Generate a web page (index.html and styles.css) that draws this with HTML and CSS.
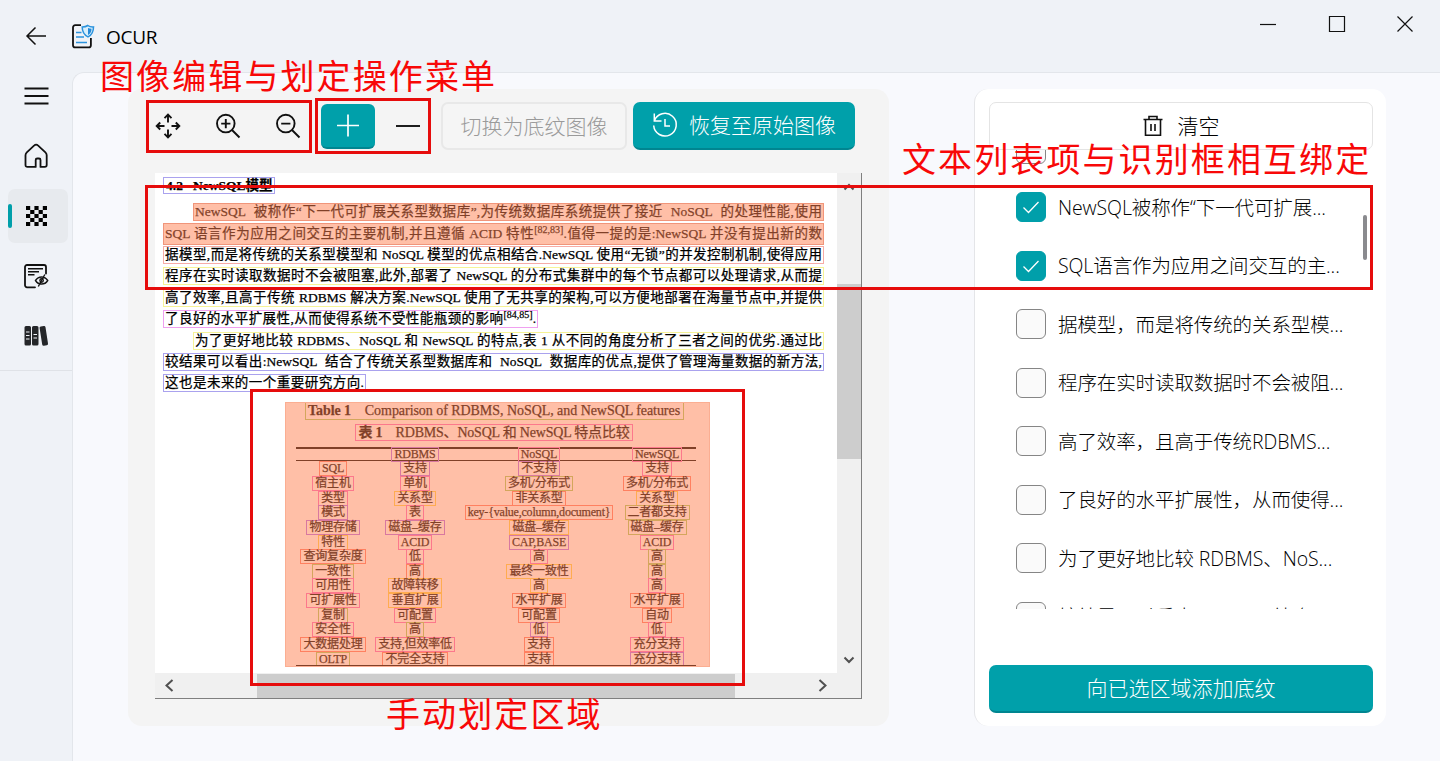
FILE: index.html
```
<!DOCTYPE html>
<html lang="zh-CN">
<head>
<meta charset="utf-8">
<title>OCUR</title>
<link rel="stylesheet" href="styles.css">
</head>
<body>
<div class="app">
  <header class="titlebar">
    <svg class="back" width="22" height="20" viewBox="0 0 22 20"><path d="M21 10H2M10.500 1.500L2 10l8.500 8.500"/></svg>
    <svg class="logo" width="23" height="25" viewBox="0 0 23 25">
      <path class="ink" d="M9 1.200H3.200A2.200 2.200 0 0 0 1 3.400v17.800a2.200 2.200 0 0 0 2.200 2.200h13.500a2.200 2.200 0 0 0 2.200-2.200V14"/>
      <path class="blue" d="M4 8.500h5.500M4 13h8M4 18.500h11"/>
      <path class="shield" d="M15.800 1.500c1.600 1.100 3.500 1.500 5.700 1.400 0 4.500-1.200 7.700-5.500 9.900-4.300-2.200-5.800-5.400-5.800-9.900 2.200 0 4-.4 5.600-1.400z"/>
      <path class="shield-half" d="M16 4v7c2.800-1.600 3.500-3.500 3.500-6.200-1.400 0-2.500-.3-3.500-.8z"/>
    </svg>
    <span class="app-name">OCUR</span>
    <div class="window-controls">
      <svg width="18" height="18" viewBox="0 0 18 18"><path d="M1 9.500h16"/></svg>
      <svg width="18" height="18" viewBox="0 0 18 18"><path d="M1.500 1.500h15v15h-15z"/></svg>
      <svg width="18" height="18" viewBox="0 0 18 18"><path d="M1.500 1.500l15 15M16.500 1.500l-15 15"/></svg>
    </div>
  </header>

  <div class="body">
    <nav class="sidebar">
      <div class="nav-item"><svg width="26" height="26" viewBox="0 0 26 26"><path d="M1.500 5.500h24M1.500 13h24M1.500 20.500h24"/></svg></div>
      <div class="nav-item"><svg width="26" height="26" viewBox="0 0 26 26"><path class="round" d="M2.500 12.300c0-1.300.4-2 1.300-2.900l7.500-7c1.100-1.100 2.500-1.100 3.600 0l7.500 7c.9.900 1.300 1.600 1.300 2.900v9.700c0 1.200-.7 1.900-1.900 1.900h-4.300V17c0-1-.6-1.500-1.500-1.500h-1.800c-.9 0-1.500.5-1.500 1.500v6.900H4.400c-1.200 0-1.900-.7-1.900-1.900z"/></svg></div>
      <div class="nav-item active"><div class="nav-pill"><svg width="21" height="20" viewBox="0 0 21 20"><path class="solid" d="M0 0h4.200v4H0zM8.400 0h4.200v4H8.400zM16.800 0H21v4h-4.200zM4.200 4h4.200v4H4.200zM12.600 4h4.200v4h-4.200zM0 8h4.200v4H0zM8.400 8h4.200v4H8.400zM16.800 8H21v4h-4.200zM4.200 12h4.200v4H4.200zM12.600 12h4.200v4h-4.200zM0 16h4.200v4H0zM8.400 16h4.200v4H8.400zM16.800 16H21v4h-4.200z"/></svg></div></div>
      <div class="nav-item"><svg width="26" height="26" viewBox="0 0 26 26"><path class="round" d="M12 24.300H4A2 2 0 0 1 2 22.300V4a2 2 0 0 1 2-2h17a2 2 0 0 1 2 2v6.500"/><path class="fine" d="M5 5.800h15M5 8.800h11M5 11.800h6.500M12.500 17.500c3-4.700 9.200-4.700 12.200 0-3 4.700-9.200 4.700-12.200 0zM21.800 11.500l-6.500 12"/><circle class="fine" cx="18.600" cy="17.500" r="1.700"/></svg></div>
      <div class="nav-item"><svg width="26" height="22" viewBox="0 0 26 22"><path class="book" d="M3 1h3.500a1.500 1.500 0 0 1 1.500 1.500v16.500a1.500 1.500 0 0 1-1.500 1.500H3A1.500 1.500 0 0 1 1.500 19V2.500A1.500 1.500 0 0 1 3 1zM10.500 1H14a1.500 1.500 0 0 1 1.500 1.500V19a1.500 1.500 0 0 1-1.500 1.500h-3.500A1.500 1.500 0 0 1 9 19V2.500A1.500 1.500 0 0 1 10.500 1zM17.800 1.400l3-.4a1.500 1.500 0 0 1 1.700 1.200l2.500 16.400a1.500 1.500 0 0 1-1.200 1.700l-2.900.4a1.500 1.500 0 0 1-1.700-1.200L16.600 3.100a1.500 1.500 0 0 1 1.200-1.700z"/><path class="bands" d="M3 7h3.500M3 10.500h3.500M3 14h3.500M10.500 9.500h3.500M10.500 13h3.500"/></svg></div>
    </nav>

    <main class="main">
      <section class="editor">
        <div class="toolbar">
          <div class="tool"><svg width="26" height="26" viewBox="0 0 26 26"><path d="M13 1.800v7.700M13 16.500v7.700M1.800 13h7.700M16.500 13h7.700M9.500 5.200L13 1.700l3.500 3.500M9.500 20.800l3.500 3.500 3.500-3.500M5.200 9.500L1.700 13l3.500 3.500M20.800 9.500l3.500 3.500-3.500 3.500"/></svg></div>
          <div class="tool"><svg width="26" height="26" viewBox="0 0 26 26"><circle cx="10.800" cy="10.600" r="8.800"/><path d="M17 17l7.500 7.500M10.800 6v9.200M6.200 10.600h9.200"/></svg></div>
          <div class="tool"><svg width="26" height="26" viewBox="0 0 26 26"><circle cx="10.800" cy="10.600" r="8.800"/><path d="M17 17l7.500 7.500M6.200 10.600h9.200"/></svg></div>
          <div class="tool"><div class="tool-on"><svg width="24" height="24" viewBox="0 0 24 24"><path d="M12 1.500v22M1 12.500h22"/></svg></div></div>
          <div class="tool"><svg width="24" height="24" viewBox="0 0 24 24"><path d="M0 12h24"/></svg></div>
          <div class="btn disabled"><span>切换为底纹图像</span></div>
          <div class="btn primary restore"><svg width="26" height="26" viewBox="0 0 26 26"><path d="M2.300 9A11.300 11.300 0 1 1 1.700 13.500M2.300 1.500V9h7.200M13 7v7h5"/></svg><span>恢复至原始图像</span></div>
        </div>

        <div class="viewer">
          <div class="page">
            <div class="heading"><span class="hit violet">4.2&nbsp;&nbsp; NewSQL模型</span></div>
            <div class="lines">
              <div class="line indent"><div class="hit marked">NewSQL&nbsp; 被称作“下一代可扩展关系型数据库”,为传统数据库系统提供了接近&nbsp; NoSQL&nbsp; 的处理性能,使用</div></div>
              <div class="line"><div class="hit marked tall">SQL 语言作为应用之间交互的主要机制,并且遵循 ACID 特性<sup>[82,83]</sup>.值得一提的是:NewSQL 并没有提出新的数</div></div>
              <div class="line"><div class="hit rose">据模型,而是将传统的关系型模型和 NoSQL 模型的优点相结合.NewSQL 使用“无锁”的并发控制机制,使得应用</div></div>
              <div class="line"><div class="hit yellow">程序在实时读取数据时不会被阻塞,此外,部署了 NewSQL 的分布式集群中的每个节点都可以处理请求,从而提</div></div>
              <div class="line"><div class="hit yellow">高了效率,且高于传统 RDBMS 解决方案.NewSQL 使用了无共享的架构,可以方便地部署在海量节点中,并提供</div></div>
              <div class="line short"><div class="hit pink">了良好的水平扩展性,从而使得系统不受性能瓶颈的影响<sup>[84,85]</sup>.</div></div>
              <div class="line indent"><div class="hit yellow">为了更好地比较 RDBMS、NoSQL 和 NewSQL 的特点,表 1 从不同的角度分析了三者之间的优劣.通过比</div></div>
              <div class="line"><div class="hit violet">较结果可以看出:NewSQL&nbsp; 结合了传统关系型数据库和&nbsp; NoSQL&nbsp; 数据库的优点,提供了管理海量数据的新方法,</div></div>
              <div class="line last"><div class="hit violet">这也是未来的一个重要研究方向.</div></div>
            </div>
            <div class="region">
              <div class="caption-en"><span class="cell green"><b>Table 1</b>&nbsp;&nbsp;&nbsp; Comparison of RDBMS, NoSQL, and NewSQL features</span></div>
              <div class="caption-zh"><span class="cell pink"><b>表 1</b>&nbsp;&nbsp;&nbsp; RDBMS、NoSQL 和 NewSQL 特点比较</span></div>
              <div class="grid head"><i></i><i><span class="cell violet">RDBMS</span></i><i><span class="cell pink">NoSQL</span></i><i><span class="cell pink">NewSQL</span></i></div>
              <div class="grid rows">
                <i><span class="cell rose">SQL</span></i><i><span class="cell violet">支持</span></i><i><span class="cell violet">不支持</span></i><i><span class="cell pink">支持</span></i>
                <i><span class="cell pink">宿主机</span></i><i><span class="cell pink">单机</span></i><i><span class="cell green">多机/分布式</span></i><i><span class="cell rose">多机/分布式</span></i>
                <i><span class="cell pink">类型</span></i><i><span class="cell yellow">关系型</span></i><i><span class="cell rose">非关系型</span></i><i><span class="cell yellow">关系型</span></i>
                <i><span class="cell violet">模式</span></i><i><span class="cell pink">表</span></i><i><span class="cell rose">key-{value,column,document}</span></i><i><span class="cell green">二者都支持</span></i>
                <i><span class="cell violet">物理存储</span></i><i><span class="cell violet">磁盘–缓存</span></i><i><span class="cell yellow">磁盘–缓存</span></i><i><span class="cell green">磁盘–缓存</span></i>
                <i><span class="cell yellow">特性</span></i><i><span class="cell pink">ACID</span></i><i><span class="cell violet">CAP,BASE</span></i><i><span class="cell pink">ACID</span></i>
                <i><span class="cell rose">查询复杂度</span></i><i><span class="cell pink">低</span></i><i><span class="cell pink">高</span></i><i><span class="cell green">高</span></i>
                <i><span class="cell green">一致性</span></i><i><span class="cell rose">高</span></i><i><span class="cell yellow">最终一致性</span></i><i><span class="cell green">高</span></i>
                <i><span class="cell pink">可用性</span></i><i><span class="cell yellow">故障转移</span></i><i><span class="cell yellow">高</span></i><i><span class="cell pink">高</span></i>
                <i><span class="cell pink">可扩展性</span></i><i><span class="cell yellow">垂直扩展</span></i><i><span class="cell rose">水平扩展</span></i><i><span class="cell rose">水平扩展</span></i>
                <i><span class="cell green">复制</span></i><i><span class="cell pink">可配置</span></i><i><span class="cell rose">可配置</span></i><i><span class="cell rose">自动</span></i>
                <i><span class="cell pink">安全性</span></i><i><span class="cell green">高</span></i><i><span class="cell violet">低</span></i><i><span class="cell pink">低</span></i>
                <i><span class="cell rose">大数据处理</span></i><i><span class="cell pink">支持,但效率低</span></i><i><span class="cell rose">支持</span></i><i><span class="cell pink">充分支持</span></i>
                <i><span class="cell green">OLTP</span></i><i><span class="cell rose">不完全支持</span></i><i><span class="cell rose">支持</span></i><i><span class="cell violet">充分支持</span></i>
              </div>
            </div>
          </div>
          <div class="vscroll">
            <svg width="12" height="8" viewBox="0 0 12 8"><path d="M1.500 6.500L6 2l4.500 4.500"/></svg>
            <div class="vthumb"></div>
            <svg class="down" width="12" height="8" viewBox="0 0 12 8"><path d="M1.500 1.500L6 6l4.500-4.500"/></svg>
          </div>
          <div class="hscroll">
            <svg width="10" height="13" viewBox="0 0 10 13"><path d="M8.500 1L2.500 6.500l6 5.500"/></svg>
            <div class="hthumb"></div>
            <svg class="right" width="10" height="13" viewBox="0 0 10 13"><path d="M1.500 1l6 5.500-6 5.500"/></svg>
          </div>
        </div>
      </section>

      <aside class="panel">
        <div class="btn clear"><svg width="20" height="22" viewBox="0 0 20 22"><path d="M.5 4.500h19M6 4.300V1.500h8v2.800M2.500 4.500v15.700h15V4.500M8 9v7M12 9v7"/></svg><span>清空</span></div>
        <div class="list">
          <div class="item"><span class="box"></span></div>
          <div class="item"><span class="box on"><svg width="18" height="14" viewBox="0 0 18 14"><path d="M1.500 7.500L6.500 12.500 16.500 2"/></svg></span><span class="label">NewSQL被称作“下一代可扩展...</span></div>
          <div class="item"><span class="box on"><svg width="18" height="14" viewBox="0 0 18 14"><path d="M1.500 7.500L6.500 12.500 16.500 2"/></svg></span><span class="label">SQL语言作为应用之间交互的主...</span></div>
          <div class="item"><span class="box"></span><span class="label">据模型，而是将传统的关系型模...</span></div>
          <div class="item"><span class="box"></span><span class="label">程序在实时读取数据时不会被阻...</span></div>
          <div class="item"><span class="box"></span><span class="label">高了效率，且高于传统RDBMS...</span></div>
          <div class="item"><span class="box"></span><span class="label">了良好的水平扩展性，从而使得...</span></div>
          <div class="item"><span class="box"></span><span class="label">为了更好地比较 RDBMS、NoS...</span></div>
          <div class="item"><span class="box"></span><span class="label">较结果可以看出NewSQL 结合...</span></div>
          <div class="list-thumb"></div>
        </div>
        <div class="btn primary add"><span>向已选区域添加底纹</span></div>
      </aside>
    </main>
  </div>

  <div class="frame frame-view"></div>
  <div class="frame frame-select"></div>
  <div class="frame frame-bind"></div>
  <div class="frame frame-region"></div>
  <div class="note note-menu">图像编辑与划定操作菜单</div>
  <div class="note note-bind">文本列表项与识别框相互绑定</div>
  <div class="note note-region">手动划定区域</div>
</div>
</body>
</html>
```
FILE: styles.css
```
* { box-sizing: border-box; }
body {
  margin: 0;
  font-family: "Open Sans", "Noto Sans CJK SC", sans-serif;
  font-size: 20px;
  font-weight: 300;
  color: #000;
}
svg { display: block; flex: none; fill: none; stroke: #111; stroke-width: 1.9; overflow: visible; }
.app { position: relative; width: 1440px; height: 761px; overflow: hidden; background: #eff2f7; display: flex; flex-direction: column; }

.titlebar { height: 66px; flex: none; display: flex; align-items: flex-start; padding-left: 25px; }
.back { margin-top: 26px; stroke-width: 1.5; }
.logo { margin: 24px 0 0 25px; }
.logo .ink { stroke-width: 1.8; }
.logo .blue { stroke: #2b93dd; stroke-width: 1.5; }
.logo .shield { stroke: #2b93dd; stroke-width: 1.5; fill: #d9effc; }
.logo .shield-half { stroke: none; fill: #2489d8; }
.app-name { margin: 23px 0 0 11px; line-height: 28px; font-size: 19px; font-weight: 400; letter-spacing: -0.3px; }
.window-controls { margin: 15px 26px 0 auto; display: flex; gap: 50.5px; }
.window-controls svg { stroke-width: 1.2; }

.body { flex: 1; display: flex; min-height: 0; }
.sidebar { width: 72px; height: 305px; border-bottom: 1px solid #dfe2e7; }
.nav-item { height: 60px; display: flex; align-items: center; justify-content: center; }
.nav-item .round { stroke-linecap: round; stroke-linejoin: round; stroke-width: 1.8; }
.nav-item .fine { stroke-width: 1.4; }
.nav-item .solid { fill: #000; stroke: none; }
.nav-item .book { fill: #242629; stroke: none; }
.nav-item .bands { stroke: #eff2f7; stroke-width: 1.2; }
.nav-pill { width: 60px; height: 54px; margin-left: 3px; border-radius: 7px; background: #e7eaee; display: flex; align-items: center; padding-right: 20px; }
.nav-pill::before { content: ""; width: 4px; height: 24px; margin-right: 14px; border-radius: 2px; background: #009faa; }

.main { flex: 1; margin-top: 6px; border: 1px solid #e3e6eb; border-width: 1px 0 0 1px; border-radius: 12px 0 0 0; background: #f8f9fd; display: flex; align-items: flex-start; gap: 85px; padding: 16px 0 0 55px; }
.editor { width: 761px; height: 637px; border-radius: 14px; background: #f4f4f4; padding: 13px 27px 0 10px; }
.toolbar { display: flex; height: 48px; }
.tool { width: 60px; display: flex; align-items: center; justify-content: center; }
.tool-on { width: 54px; height: 45px; border-radius: 6px; background: #00a0aa; border-bottom: 2px solid #008590; display: flex; align-items: center; justify-content: center; }
.tool-on svg { stroke: #fff; stroke-width: 1.7; }
.btn { height: 48px; border-radius: 7px; display: flex; align-items: center; justify-content: center; font-size: 21px; white-space: nowrap; }
.btn span { margin-top: -2px; }
.disabled { width: 186px; margin-left: 3px; border: 2px solid #e8e8e8; color: #9a9a9a; background: #f5f5f5; }
.primary { background: #00a0aa; color: #fff; border-bottom: 2px solid #008590; }
.restore { width: 222px; margin-left: 6px; gap: 11px; }
.restore svg { stroke: #fff; stroke-width: 1.5; }

.viewer { width: 707px; height: 526px; margin: 23px 0 0 17px; border: 1px solid #7f7f7f; border-width: 0 1px 1px 0; display: grid; grid-template-columns: 682px 24px; grid-template-rows: 500px 25px; background: #f0f0f0; }
.page { background: #fff; overflow: hidden; padding: 4px 0 0 8px; font-family: "Liberation Serif", "Noto Sans CJK SC", serif; font-weight: 400; font-size: 13.5px; color: #000; -webkit-text-stroke: 0.25px; }
.heading { height: 24.5px; display: flex; align-items: flex-start; white-space: nowrap; }
.heading .hit { width: 112px; padding: 0 1px 0 2px; line-height: 15px; height: 17px; font-weight: bold; font-size: 13.5px; }
.line { height: 21.4px; width: 661px; display: flex; align-items: center; }
.line .hit { flex: 1; height: 18px; line-height: 16px; padding: 0 1px; text-align: justify; text-align-last: justify; }
.line sup { font-size: 10px; line-height: 0; vertical-align: 5px; }
.line.indent { padding-left: 30px; }
.line.short { width: 375px; }
.line.last { width: 203px; }
.line .tall { height: 22px; line-height: 20px; }

.region { position: relative; width: 425px; height: 266px; margin: 8px 0 0 122px; border-bottom: 1px solid transparent; }
.region::before { content: ""; position: absolute; left: 11px; right: 14px; bottom: 0; height: 2px; background: #000; }
.caption-en, .caption-zh { display: flex; justify-content: center; white-space: nowrap; font-size: 14px; }
.caption-en { height: 22px; padding-right: 7px; }
.caption-en .cell { width: 379px; height: 18px; line-height: 16px; letter-spacing: -0.05px; }
.caption-zh { height: 22.5px; padding-right: 7px; }
.caption-zh .cell { height: 17px; line-height: 15px; }
.grid { display: grid; grid-template-columns: 96px 68px 180px 56px; }
.grid i { font-style: normal; display: flex; justify-content: center; align-items: center; white-space: nowrap; font-size: 12px; }
.head { height: 14px; margin: 0 14px 0 11px; grid-template-columns: 85px 68px 180px 56px; border-top: 2px solid #000; border-bottom: 1px solid #000; }
.head i { height: 11px; }
.rows { grid-auto-rows: 14.65px; margin-top: 1px; }

.hit, .cell { border: 1px solid transparent; }
.cell { padding: 0 2px; height: 15px; line-height: 13px; text-align: center; letter-spacing: -0.2px; flex: none; }
.violet { border-color: #aaa2ee; }
.rose { border-color: #f6aca6; }
.yellow { border-color: #f6f396; }
.pink { border-color: #f0a0f0; }
.green { border-color: #a8cc68; }
.cell.violet { border-color: #b070f0; }
.cell.rose { border-color: #ff8070; }
.cell.yellow { border-color: #ffd850; }
.cell.pink { border-color: #f870c8; }
.marked { position: relative; }
.marked::after, .region::after { content: ""; position: absolute; inset: -1px; background: rgba(255, 127, 80, 0.5); border: 1px solid #f0957a; }
.region::after { inset: 0; border-color: #fbae92; }

.vscroll { display: flex; flex-direction: column; align-items: center; padding: 10px 0 9px; }
.vscroll svg, .hscroll svg { stroke: #505050; stroke-width: 2; }
.vthumb { width: 24px; height: 175px; margin-top: 93px; background: #cdcdcd; }
.down { margin-top: auto; }
.hscroll { display: flex; align-items: center; padding: 0 9px; }
.hthumb { width: 478px; height: 24px; margin-left: 83px; background: #cdcdcd; }
.right { margin-left: auto; }

.panel { width: 412px; height: 637px; border-radius: 14px; background: #fff; border-left: 1px solid #e4e5e8; padding: 13px 13px 0 14px; }
.clear { gap: 15px; border: 1px solid #e4e4e4; }
.clear svg { stroke-width: 1.6; }
.list { position: relative; height: 459px; overflow: hidden; }
.item { height: 58.5px; display: flex; align-items: center; gap: 12px; padding-left: 27px; font-size: 19.5px; white-space: nowrap; }
.item:first-child { margin-top: -30.5px; }
.label { letter-spacing: -0.1px; margin-top: -2px; }
.box { flex: none; width: 30px; height: 30px; border: 1.5px solid #858585; border-radius: 6px; background: #fafafa; display: flex; align-items: center; justify-content: center; }
.box.on { background: #009faa; border-color: #009faa; }
.box svg { stroke: #fff; stroke-width: 1.3; }
.list-thumb { position: absolute; right: 6px; top: 65px; width: 4px; height: 45px; border-radius: 2px; background: #8a8a8e; }
.add { margin-top: 56px; }

.frame { position: absolute; border: 3px solid #e60c0c; }
.frame-view { left: 146px; top: 100px; width: 166px; height: 53px; }
.frame-select { left: 315px; top: 98px; width: 116px; height: 56px; }
.frame-bind { left: 145px; top: 185px; width: 1228px; height: 105px; }
.frame-region { left: 250px; top: 389px; width: 495px; height: 297px; }
.note { position: absolute; font-family: "Noto Sans CJK SC", sans-serif; font-weight: 400; font-size: 34px; line-height: 36px; letter-spacing: 2.1px; color: #f80808; white-space: nowrap; }
.note-menu { left: 100px; top: 57px; }
.note-bind { left: 902px; top: 140px; }
.note-region { left: 386px; top: 695px; }
```
